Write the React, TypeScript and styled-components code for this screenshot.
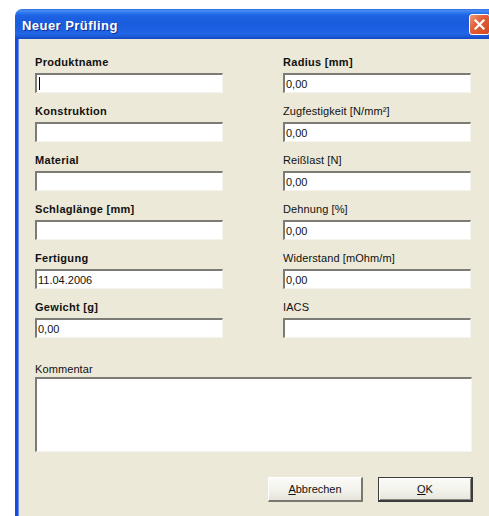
import React from "react";
import styled, { createGlobalStyle } from "styled-components";

const Global = createGlobalStyle`
  html, body {
    margin: 0;
    padding: 0;
    background: #ffffff;
    overflow: hidden;
  }
  body {
    width: 489px;
    height: 516px;
  }
`;

const Window = styled.div`
  margin: 9px 0 0 15px;
  width: 480px;
  height: 507px;
  overflow: hidden;
  display: flex;
  flex-direction: column;
`;

const TitleBar = styled.div`
  height: 30px;
  flex: none;
  box-sizing: border-box;
  border-radius: 7px 7px 0 0;
  background: linear-gradient(
    to bottom,
    #2a6fe6 0%,
    #4a8cf2 6%,
    #2f78ee 12%,
    #1c62e2 22%,
    #1a5cdd 50%,
    #1d60e2 70%,
    #2266e6 82%,
    #1c58d6 92%,
    #1548c0 100%
  );
  display: flex;
  align-items: center;
  justify-content: space-between;
  padding: 2px 5px 0 7px;
`;

const Title = styled.span`
  font-family: "Liberation Sans", Arial, sans-serif;
  font-weight: bold;
  font-size: 13px;
  letter-spacing: 0.45px;
  color: #ffffff;
  text-shadow: 1px 1px 0 #0c2f9a;
`;

const CloseButton = styled.div`
  width: 21px;
  height: 21px;
  box-sizing: border-box;
  border: 1px solid #ffffff;
  border-radius: 3px;
  background: linear-gradient(135deg, #f09a7a 0%, #e25f3a 40%, #d2491f 100%);
  display: flex;
  align-items: center;
  justify-content: center;
  margin-top: -2px;
`;

const Body = styled.div`
  flex: 1;
  background: #ece9d8;
  border-left: 3px solid #1a4ad9;
  box-shadow: inset 1px 0 0 #6d92ee;
  padding: 17px 0 0 17px;
  display: flex;
  flex-direction: column;
`;

const FieldGrid = styled.div`
  display: grid;
  grid-template-columns: 188px 188px;
  column-gap: 60px;
  row-gap: 12px;
`;

const Field = styled.div`
  display: flex;
  flex-direction: column;
  gap: 4px;
`;

const Label = styled.div<{ $bold?: boolean }>`
  font-family: "Liberation Sans", Arial, sans-serif;
  font-size: 11px;
  line-height: 13px;
  height: 13px;
  color: #111;
  font-weight: ${(p) => (p.$bold ? "bold" : "normal")};
  letter-spacing: ${(p) => (p.$bold ? "0.3px" : "0.1px")};
  white-space: nowrap;
`;

const sunken = `
  box-sizing: border-box;
  background: #ffffff;
  border-top: 2px solid #7c7b75;
  border-left: 2px solid #7c7b75;
  border-bottom: 1px solid #f4f3ec;
  border-right: 1px solid #f4f3ec;
`;

const TextBox = styled.div`
  ${sunken}
  height: 20px;
  display: flex;
  align-items: center;
  padding-left: 1px;
  font-family: "Liberation Sans", Arial, sans-serif;
  font-size: 11px;
  color: #111;
`;

const Caret = styled.span`
  display: inline-block;
  width: 1px;
  height: 13px;
  background: #000;
  margin-left: 1px;
`;

const CommentBlock = styled.div`
  margin-top: 25px;
  display: flex;
  flex-direction: column;
  gap: 1px;
  width: 437px;
`;

const TextArea = styled.div`
  ${sunken}
  height: 75px;
`;

const ButtonRow = styled.div`
  margin-top: 25px;
  width: 438px;
  display: flex;
  justify-content: flex-end;
  gap: 15px;
`;

const Button = styled.div<{ $default?: boolean }>`
  width: 95px;
  height: 25px;
  box-sizing: border-box;
  display: flex;
  align-items: center;
  justify-content: center;
  font-family: "Liberation Sans", Arial, sans-serif;
  font-size: 11px;
  color: #111;
  background: linear-gradient(to bottom, #fbfbf8 0%, #f2f1ea 60%, #e6e4da 100%);
  border-top: 1px solid ${(p) => (p.$default ? "#3c3c3c" : "#ffffff")};
  border-left: 1px solid ${(p) => (p.$default ? "#3c3c3c" : "#ffffff")};
  border-right: 2px solid ${(p) => (p.$default ? "#3c3c3c" : "#7a786e")};
  border-bottom: 2px solid ${(p) => (p.$default ? "#3c3c3c" : "#7a786e")};
  box-shadow: ${(p) =>
    p.$default ? "inset 1px 1px 0 #ffffff, inset -1px -1px 0 #8a887e" : "none"};
`;

const Key = styled.span`
  text-decoration: underline;
`;

type FieldDef = { label: string; bold?: boolean; value?: string; caret?: boolean };

const fields: FieldDef[] = [
  { label: "Produktname", bold: true, caret: true },
  { label: "Radius [mm]", bold: true, value: "0,00" },
  { label: "Konstruktion", bold: true },
  { label: "Zugfestigkeit [N/mm²]", value: "0,00" },
  { label: "Material", bold: true },
  { label: "Reißlast [N]", value: "0,00" },
  { label: "Schlaglänge [mm]", bold: true },
  { label: "Dehnung [%]", value: "0,00" },
  { label: "Fertigung", bold: true, value: "11.04.2006" },
  { label: "Widerstand [mOhm/m]", value: "0,00" },
  { label: "Gewicht [g]", bold: true, value: "0,00" },
  { label: "IACS" },
];

export default function App() {
  return (
    <>
      <Global />
      <Window>
        <TitleBar>
          <Title>Neuer Prüfling</Title>
          <CloseButton>
            <svg width="13" height="13" viewBox="0 0 13 13">
              <path
                d="M2.5 2.5 L10.5 10.5 M10.5 2.5 L2.5 10.5"
                stroke="#ffffff"
                strokeWidth="2.2"
                strokeLinecap="square"
              />
            </svg>
          </CloseButton>
        </TitleBar>
        <Body>
          <FieldGrid>
            {fields.map((f) => (
              <Field key={f.label}>
                <Label $bold={f.bold}>{f.label}</Label>
                <TextBox>
                  {f.caret ? <Caret /> : f.value}
                </TextBox>
              </Field>
            ))}
          </FieldGrid>
          <CommentBlock>
            <Label>Kommentar</Label>
            <TextArea />
          </CommentBlock>
          <ButtonRow>
            <Button>
              <span>
                <Key>A</Key>bbrechen
              </span>
            </Button>
            <Button $default>
              <span>
                <Key>O</Key>K
              </span>
            </Button>
          </ButtonRow>
        </Body>
      </Window>
    </>
  );
}
